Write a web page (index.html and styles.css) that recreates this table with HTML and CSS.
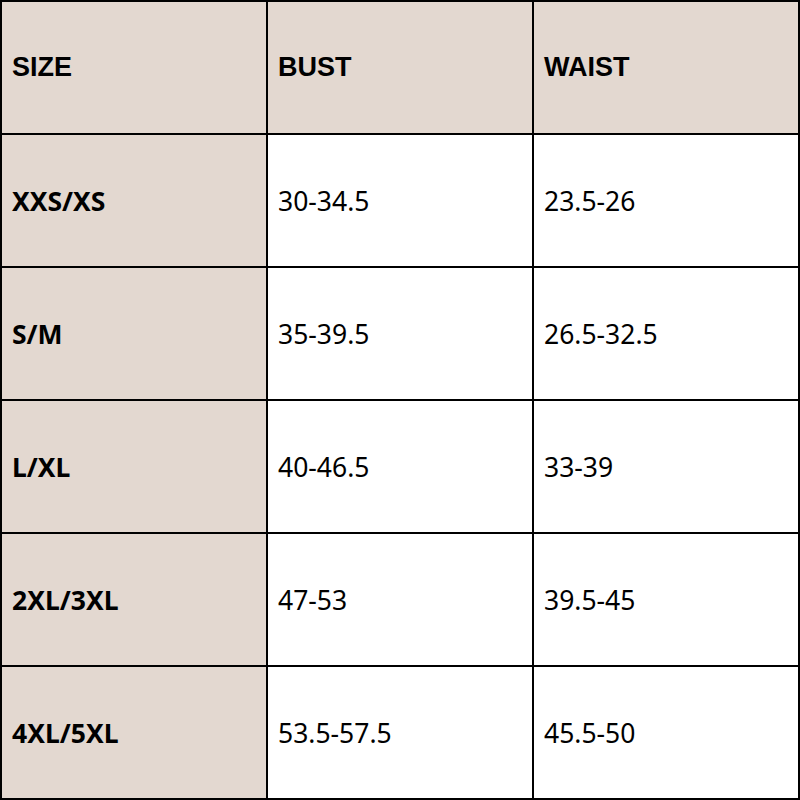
FILE: index.html
```html
<!DOCTYPE html>
<html lang="en">
<head>
<meta charset="utf-8">
<title>Size chart</title>
<link rel="stylesheet" href="styles.css">
</head>
<body>
<div class="chart">
  <div class="cell head">SIZE</div>
  <div class="cell head">BUST</div>
  <div class="cell head">WAIST</div>

  <div class="cell size">XXS/XS</div>
  <div class="cell val">30-34.5</div>
  <div class="cell val">23.5-26</div>

  <div class="cell size">S/M</div>
  <div class="cell val">35-39.5</div>
  <div class="cell val">26.5-32.5</div>

  <div class="cell size">L/XL</div>
  <div class="cell val">40-46.5</div>
  <div class="cell val">33-39</div>

  <div class="cell size">2XL/3XL</div>
  <div class="cell val">47-53</div>
  <div class="cell val">39.5-45</div>

  <div class="cell size">4XL/5XL</div>
  <div class="cell val">53.5-57.5</div>
  <div class="cell val">45.5-50</div>
</div>
</body>
</html>
```
FILE: styles.css
```css
html, body {
  margin: 0;
  padding: 0;
  background: #ffffff;
}

.chart {
  box-sizing: border-box;
  width: 800px;
  height: 800px;
  display: grid;
  grid-template-columns: repeat(3, 1fr);
  grid-template-rows: repeat(6, 1fr);
  gap: 2px;
  padding: 2px;
  background: #000000;
}

.cell {
  display: flex;
  align-items: center;
  padding: 0 10px;
  background: #ffffff;
  color: #000000;
  font-size: 26.5px;
}

.head {
  background: #e3d8d0;
  font-family: "Liberation Sans", Arial, sans-serif;
  font-weight: 700;
  font-size: 27px;
}

.size {
  background: #e3d8d0;
  font-family: "Noto Sans", "Open Sans", sans-serif;
  font-weight: 700;
}

.val {
  font-family: "Noto Sans", "Open Sans", sans-serif;
  font-weight: 400;
}
```
